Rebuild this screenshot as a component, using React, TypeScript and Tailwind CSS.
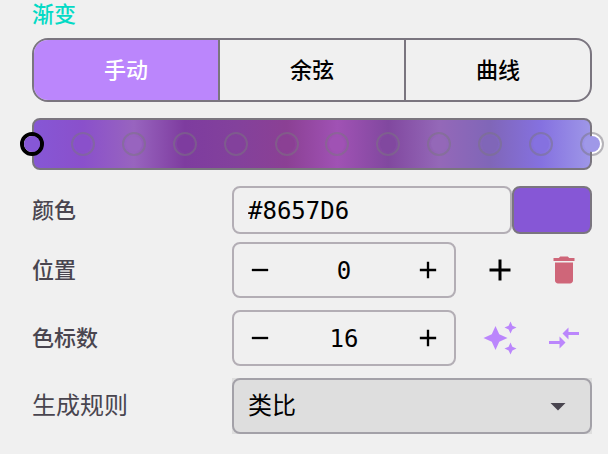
import { MdAdd, MdArrowDropDown, MdAutoAwesome, MdCompareArrows, MdDelete, MdRemove } from "react-icons/md";

const tabs = ["手动", "余弦", "曲线"];

const stops = [
  "#8657d6",
  "#8a50cb",
  "#9864bf",
  "#7e3c9f",
  "#83419c",
  "#8b4094",
  "#a052b4",
  "#81489f",
  "#9468b8",
  "#8066b8",
  "#8571e0",
  "#9f98e8",
];

const gradient = `linear-gradient(to right, ${stops.join(", ")})`;

function stopClass(i: number) {
  if (i === 0) {
    return "absolute top-1/2 size-6 -translate-1/2 rounded-full border-4 border-black";
  }
  if (i === stops.length - 1) {
    // half of this one hangs outside the bar
    return "absolute top-1/2 size-6 -translate-1/2 rounded-full border-2 border-[#7a757f]/50 bg-linear-to-r from-transparent from-50% to-white to-50% bg-clip-padding p-[2px]";
  }
  return "absolute top-1/2 size-6 -translate-1/2 rounded-full border-2 border-[#7a757f]/50 p-[2px]";
}

function GradientBar() {
  return (
    <div className="relative mt-4">
      <div
        className="h-13 rounded-lg border-2 border-[#7a757f] bg-origin-border"
        style={{ backgroundImage: gradient }}
      />
      {stops.map((color, i) => (
        <button
          key={i}
          type="button"
          aria-label={`色标 ${i + 1}`}
          className={stopClass(i)}
          style={{ left: `${(i / (stops.length - 1)) * 100}%` }}
        >
          <span className="block size-full rounded-full" style={{ backgroundColor: color }} />
        </button>
      ))}
    </div>
  );
}

function Stepper({ id, value }: { id: string; value: number }) {
  return (
    <div className="flex h-14 w-56 items-center justify-between rounded-lg border-2 border-[#b3aeb5] px-3">
      <button type="button" aria-label="减少" className="cursor-pointer">
        <MdRemove className="size-7" />
      </button>
      <input
        id={id}
        defaultValue={value}
        inputMode="numeric"
        className="w-24 bg-transparent pt-[2px] text-center font-['DejaVu_Sans_Mono',monospace] text-2xl outline-none"
      />
      <button type="button" aria-label="增加" className="cursor-pointer">
        <MdAdd className="size-7" />
      </button>
    </div>
  );
}

export default function App() {
  return (
    <main className="min-h-screen bg-[#f0f0f0] pr-4 pb-5 pl-8 font-['Noto_Sans_CJK_SC',sans-serif] text-[22px] text-black">
      <h2 className="leading-6 font-medium text-[#03dac5]">渐变</h2>

      {/* Mode */}
      <div className="mt-[14px] flex h-16 overflow-hidden rounded-2xl border-2 border-[#7a757f]">
        {tabs.map((tab, i) => (
          <button
            key={tab}
            type="button"
            aria-pressed={i === 0}
            className={
              i === 0
                ? "flex-1 cursor-pointer bg-[#bb86fc] pb-1 font-medium text-white"
                : "flex-1 cursor-pointer border-l-2 border-[#7a757f] pb-1 font-medium"
            }
          >
            {tab}
          </button>
        ))}
      </div>

      <GradientBar />

      {/* Color */}
      <div className="mt-4 flex items-center">
        <label htmlFor="color" className="w-50 shrink-0 pb-1 font-medium text-[#49454f]">颜色</label>
        <input
          id="color"
          defaultValue="#8657D6"
          className="h-12 min-w-0 flex-1 rounded-lg border-2 border-[#b3aeb5] bg-transparent px-[14px] pt-[2px] font-['DejaVu_Sans_Mono',monospace] text-2xl outline-none"
        />
        <button
          type="button"
          aria-label="选择颜色"
          className="h-12 w-20 cursor-pointer rounded-lg border-2 border-[#7a757f] bg-[#8657d6]"
        />
      </div>

      {/* Position */}
      <div className="mt-2 flex items-center">
        <label htmlFor="position" className="w-50 shrink-0 pb-1 font-medium text-[#49454f]">位置</label>
        <Stepper id="position" value={0} />
        <div className="flex flex-1 justify-between pr-[10px] pl-[26px]">
          <button type="button" aria-label="添加色标" className="cursor-pointer">
            <MdAdd className="size-9" />
          </button>
          <button type="button" aria-label="删除色标" className="cursor-pointer text-[#cf6679]">
            <MdDelete className="size-9" />
          </button>
        </div>
      </div>

      {/* Count */}
      <div className="mt-3 flex items-center">
        <label htmlFor="count" className="w-50 shrink-0 pb-1 font-medium text-[#49454f]">色标数</label>
        <Stepper id="count" value={16} />
        <div className="flex flex-1 justify-between pr-[10px] pl-[26px] text-[#bb86fc]">
          <button type="button" aria-label="随机生成" className="cursor-pointer">
            <MdAutoAwesome className="size-9" />
          </button>
          <button type="button" aria-label="反转" className="cursor-pointer">
            <MdCompareArrows className="size-9" />
          </button>
        </div>
      </div>

      {/* Rule */}
      <div className="mt-3 flex items-center text-2xl">
        <label htmlFor="rule" className="w-50 shrink-0 pb-1 text-[#49454f]">生成规则</label>
        <div className="relative flex-1 bg-[#dedede]">
          <select
            id="rule"
            className="block h-14 w-full cursor-pointer appearance-none rounded-lg border-2 border-[#a3a1a8] bg-[#dedede] px-[14px] pb-1 outline-none"
          >
            <option>类比</option>
          </select>
          <MdArrowDropDown className="pointer-events-none absolute inset-y-0 right-4 my-auto size-9 text-[#49454f]" />
        </div>
      </div>
    </main>
  );
}
